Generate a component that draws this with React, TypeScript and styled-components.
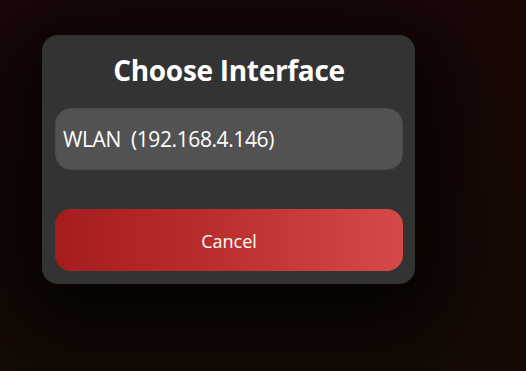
import styled, { createGlobalStyle } from 'styled-components';

const Global = createGlobalStyle`
	html, body {
		margin: 0;
		padding: 0;
		background: #170806;
	}
	body {
		font-family: 'Open Sans', 'Noto Sans', sans-serif;
	}
`;

const Screen = styled.div`
	width: 526px;
	height: 371px;
	box-sizing: border-box;
	padding: 35px 0 0 42px;
	background: linear-gradient(180deg, #1a0807 0%, #150a05 100%);
	overflow: hidden;
`;

const Dialog = styled.div`
	width: 373px;
	height: 249px;
	box-sizing: border-box;
	padding: 15px 12px 13px 13px;
	background: #333333;
	border-radius: 16px;
	box-shadow: 0 20px 80px 30px rgba(0, 0, 0, 0.75);
	display: flex;
	flex-direction: column;
`;

const Title = styled.h1`
	margin: 0;
	height: 40px;
	font-size: 28px;
	font-weight: 700;
	color: #ffffff;
	text-align: center;
	line-height: 40px;
	letter-spacing: -0.3px;
`;

const Option = styled.button`
	margin-top: 18px;
	height: 62px;
	width: 100%;
	box-sizing: border-box;
	padding: 0 7px;
	background: #525252;
	border: 1px solid #4a4a4a;
	border-radius: 16px;
	color: #ffffff;
	font-family: inherit;
	font-size: 21px;
	text-align: left;
	white-space: pre;
	letter-spacing: -0.4px;
`;

const CancelButton = styled.button`
	margin-top: auto;
	height: 62px;
	width: 100%;
	padding-top: 3px;
	border: none;
	border-radius: 16px;
	background: linear-gradient(90deg, #a61c1c 0%, #b82b2b 40%, #d64949 100%);
	color: #ffffff;
	font-family: inherit;
	font-size: 18px;
`;

export default function App() {
	return (
		<Screen>
			<Global />
			<Dialog>
				<Title>Choose Interface</Title>
				<Option>{'WLAN  (192.168.4.146)'}</Option>
				<CancelButton>Cancel</CancelButton>
			</Dialog>
		</Screen>
	);
}
